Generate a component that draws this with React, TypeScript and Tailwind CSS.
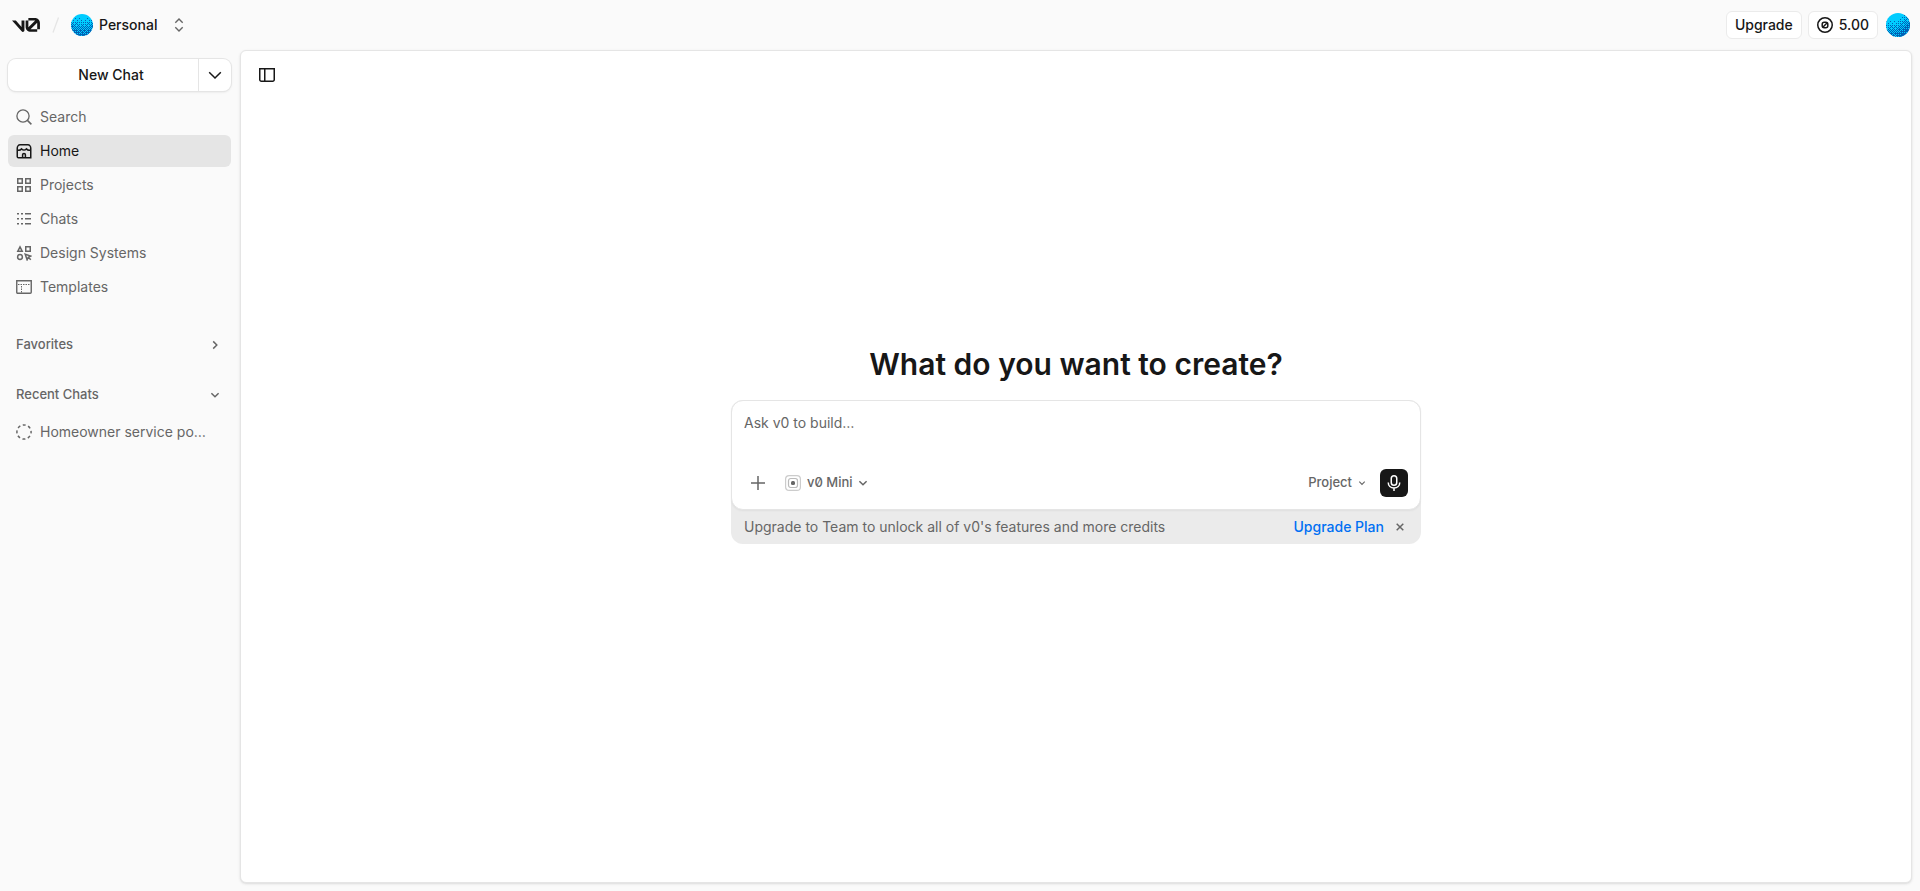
import type {ComponentType, ReactNode} from 'react'
import clsx from 'clsx'

function Icon({children, className}: {children: ReactNode; className?: string}) {
    return (
        <svg
            viewBox="0 0 16 16"
            fill="none"
            stroke="currentColor"
            strokeWidth={1.5}
            aria-hidden="true"
            className={clsx('shrink-0', className ?? 'size-4')}
        >
            {children}
        </svg>
    )
}

const SearchIcon = () => (
    <Icon>
        <circle cx="7" cy="7" r="6.1" strokeWidth={1.3}/>
        <path d="M11.4 11.4 15.4 15.4"/>
    </Icon>
)

const HomeIcon = () => (
    <Icon>
        <path d="M1.25 6.2V13.5C1.25 14.3 1.5 14.75 2.4 14.75H14.75V5.2C14.75 3.5 13.6 1.75 11.9 1.75H4.1C2.4 1.75 1.25 3.5 1.25 5.2V6.5C2.4 7.6 4.2 7.4 5.7 5.9C7 7.4 9 7.4 10.3 5.9C11.8 7.4 13.6 7.6 14.75 6.5"/>
        <path d="M6.6 14.5V11.8A1.4 1.4 0 0 1 9.4 11.8V14.5"/>
    </Icon>
)

const ProjectsIcon = () => (
    <Icon>
        <path d="M1.75 1.75H6.25V6.25H1.75ZM9.75 1.75H14.25V6.25H9.75ZM1.75 9.75H6.25V14.25H1.75ZM9.75 9.75H14.25V14.25H9.75Z"/>
    </Icon>
)

const ChatsIcon = () => (
    <Icon>
        <path d="M1 2.75H3M5 2.75H7M9 2.75H15M1 7.75H3M5 7.75H7M9 7.75H15M1 12.75H3M5 12.75H7M9 12.75H15"/>
    </Icon>
)

const DesignSystemsIcon = () => (
    <Icon>
        <path d="M4 1.9 6.2 6.25H1.8ZM9.75 1.75H14.25V6.25H9.75Z"/>
        <circle cx="4" cy="12" r="2.4"/>
        <path d="M9.2 9.2 14.8 11.1 12.3 12.3 11.1 14.8ZM12 12 14.8 14.8"/>
    </Icon>
)

const TemplatesIcon = () => (
    <Icon>
        <path d="M.75 1.75H15.25V13.2C15.25 14 14.8 14.25 14.2 14.25H1.8C1.1 14.25 .75 13.8 .75 13.2Z" strokeWidth={1.4}/>
        <path d="M2 5.5H14M5.5 7V14" strokeWidth={1} strokeDasharray="1.5 1"/>
    </Icon>
)

const SidebarIcon = () => (
    <Icon>
        <path d="M.75 1.75H15.25V12.6A1.6 1.6 0 0 1 13.65 14.25H2.35A1.6 1.6 0 0 1 .75 12.6ZM5.75 2V14"/>
    </Icon>
)

const ChevronDown = () => (
    <Icon>
        <path d="M2.2 5.2 8 11 13.8 5.2"/>
    </Icon>
)

const SmallChevron = ({className}: {className?: string}) => (
    <Icon className={className}>
        <path d="M4.4 6.2 8 9.8 11.6 6.2"/>
    </Icon>
)

function Logo() {
    return (
        <svg viewBox="0 0 40 20" fill="currentColor" className="h-[14px] w-7" aria-label="v0">
            <path d="M23.39 0H32.92C36.78 0 39.91 3.13 39.91 6.99V16.08H36V6.99C36 6.9 36 6.81 35.99 6.72L26.46 16.08H36V19.78H26.56C22.7 19.78 19.48 16.61 19.48 12.75V3.69H23.39V12.75C23.39 12.93 23.4 13.1 23.43 13.27L33.17 3.7C33.09 3.69 33 3.69 32.92 3.69H23.39Z"/>
            <path d="M13.77 19.1 0 3.69H5.54L13.62 12.73V3.69H17.75V17.57C17.75 19.67 15.17 20.66 13.77 19.1Z"/>
        </svg>
    )
}

const BAYER = [
    [0, 8, 2, 10],
    [12, 4, 14, 6],
    [3, 11, 1, 9],
    [15, 7, 13, 5],
]

// Dithered sphere, lit from the top
function Avatar({id, size, slant, className}: {id: string; size: number; slant: number; className: string}) {
    const cells: ReactNode[] = []
    for (let y = 0; y < size; y++) {
        for (let x = 0; x < size; x++) {
            const dx = (x - size / 2) / size
            const dy = y / size
            const shade = dy * 0.9 + dx * slant + dx * dx * 0.6
            if (shade > (BAYER[y % 4][x % 4] + 3) / 18) {
                cells.push(<rect key={`${x}-${y}`} x={x} y={y} width="1" height="1"/>)
            }
        }
    }
    return (
        <svg viewBox={`0 0 ${size} ${size}`} className={className} aria-hidden="true">
            <defs>
                <clipPath id={`${id}-clip`}>
                    <circle cx={size / 2} cy={size / 2} r={size / 2}/>
                </clipPath>
            </defs>
            <g clipPath={`url(#${id}-clip)`}>
                <rect width={size} height={size} fill="#00ccff"/>
                <g fill="#0061b5" shapeRendering="crispEdges">{cells}</g>
            </g>
        </svg>
    )
}

function Header() {
    return (
        <header className="flex h-[50px] shrink-0 items-center justify-between pr-[10px] pl-3">
            <div className="flex items-center">
                <a href="#" aria-label="v0 home"><Logo/></a>
                <svg viewBox="0 0 16 16" fill="none" stroke="#e5e5e5" strokeWidth={1.3} className="ml-2 size-4" aria-hidden="true">
                    <path d="M5 15.5 10.5 .5"/>
                </svg>
                <button type="button" className="ml-[7px] flex items-center gap-1.5 text-sm font-medium">
                    <Avatar id="team" size={22} slant={0} className="size-[22px]"/>
                    Personal
                    <Icon className="ml-2 size-4 text-[#666]">
                        <path d="M4.3 5.8 8 2.1 11.7 5.8M4.3 10.2 8 13.9 11.7 10.2" strokeWidth={1.4}/>
                    </Icon>
                </button>
            </div>
            <div className="flex items-center">
                <button type="button" className="h-7 rounded-md border border-[#ebebeb] bg-white px-2 text-sm font-medium">
                    Upgrade
                </button>
                <button type="button" className="ml-1.5 flex h-7 items-center gap-1.5 rounded-md border border-[#ebebeb] bg-white px-2 text-sm font-medium">
                    <Icon>
                        <circle cx="8" cy="8" r="7.25"/>
                        <rect x="5.2" y="5.2" width="5.6" height="5.6" rx="2"/>
                        <path d="M5.8 10.2 10.2 5.8"/>
                    </Icon>
                    5.00
                </button>
                <button type="button" aria-label="Account" className="ml-2">
                    <Avatar id="user" size={24} slant={0.5} className="size-6"/>
                </button>
            </div>
        </header>
    )
}

const links: {name: string; icon: ComponentType; active?: boolean}[] = [
    {name: 'Search', icon: SearchIcon},
    {name: 'Home', icon: HomeIcon, active: true},
    {name: 'Projects', icon: ProjectsIcon},
    {name: 'Chats', icon: ChatsIcon},
    {name: 'Design Systems', icon: DesignSystemsIcon},
    {name: 'Templates', icon: TemplatesIcon},
]

function Sidebar() {
    return (
        <aside className="flex w-60 shrink-0 flex-col pt-[9px] pr-[9px] pl-2 text-[#666]">
            <div className="rounded-lg shadow-sm">
                <div className="flex h-8 rounded-lg bg-white text-sm font-medium text-[#171717] ring-1 ring-[#e5e5e5]">
                    <button type="button" className="flex-1 pl-4">New Chat</button>
                    <button type="button" aria-label="More options" className="flex w-[33px] items-center justify-center border-l border-[#e5e5e5]">
                        <ChevronDown/>
                    </button>
                </div>
            </div>
            <nav className="mt-[10px] flex flex-col gap-0.5">
                {links.map((link) => (
                    <a
                        key={link.name}
                        href="#"
                        className={clsx(
                            'flex h-8 items-center gap-2 rounded-md px-2 text-sm',
                            link.active && 'bg-[#e5e5e5] text-[#171717]',
                        )}
                    >
                        <link.icon/>
                        {link.name}
                    </a>
                ))}
            </nav>
            <button type="button" className="mt-[26px] flex h-8 items-center justify-between px-2 text-[13px] font-medium">
                Favorites
                <SmallChevron className="size-4 -rotate-90"/>
            </button>
            <button type="button" className="mt-[18px] flex h-8 items-center justify-between px-2 text-[13px] font-medium">
                Recent Chats
                <SmallChevron/>
            </button>
            <a href="#" className="mt-[5px] flex h-8 items-center gap-2 px-2 text-sm">
                <Icon>
                    <circle cx="8" cy="8" r="7.1" strokeDasharray="3 2.58" strokeDashoffset="1.5"/>
                </Icon>
                <span className="truncate">Homeowner service po…</span>
            </a>
        </aside>
    )
}

function Composer() {
    return (
        <div className="w-full max-w-[690px] rounded-xl bg-[#ebebeb]">
            <form className="flex h-[110px] flex-col justify-between rounded-xl border border-[#e5e5e5] bg-white p-3 shadow-xs">
                <textarea
                    rows={1}
                    aria-label="Prompt"
                    placeholder="Ask v0 to build…"
                    className="block w-full resize-none text-sm outline-none placeholder:text-[#666]"
                />
                <div className="flex h-7 items-center text-[13px] font-medium text-[#666]">
                    <button type="button" aria-label="Add attachment" className="flex size-7 items-center justify-center">
                        <Icon>
                            <path d="M8 1V15M1 8H15"/>
                        </Icon>
                    </button>
                    <button type="button" className="ml-[13px] flex items-center slashed-zero">
                        <Icon className="mr-1.5 size-4">
                            <rect x=".6" y=".6" width="14.8" height="14.8" rx="3.5" stroke="#ccc" strokeWidth={1.2}/>
                            <rect x="3.5" y="3.5" width="9" height="9" rx="2.2" stroke="#bbb" strokeWidth={1.2}/>
                            <rect x="6" y="6" width="4" height="4" rx="1.5" fill="currentColor" stroke="none"/>
                        </Icon>
                        v0 Mini
                        <SmallChevron className="ml-0.5 size-4"/>
                    </button>
                    <button type="button" className="mr-3 ml-auto flex items-center gap-1">
                        Project
                        <SmallChevron className="size-3"/>
                    </button>
                    <button type="button" aria-label="Voice input" className="flex size-7 items-center justify-center rounded-md bg-[#171717] text-white">
                        <Icon>
                            <rect x="5.25" y=".75" width="5.5" height="9.5" rx="2.75"/>
                            <path d="M2.25 7.5C2.25 10.8 4.7 13 8 13S13.75 10.8 13.75 7.5M8 13V16"/>
                        </Icon>
                    </button>
                </div>
            </form>
            <div className="flex h-[34px] items-center pr-[13px] pl-[13px] text-sm text-[#666]">
                <p>Upgrade to Team to unlock all of v0's features and more credits</p>
                <a href="#" className="mr-2 ml-auto font-medium text-[#0070f3]">Upgrade Plan</a>
                <button type="button" aria-label="Dismiss">
                    <Icon>
                        <path d="M4.7 4.7 11.3 11.3M11.3 4.7 4.7 11.3"/>
                    </Icon>
                </button>
            </div>
        </div>
    )
}

export default function App() {
    return (
        <div className="flex min-h-screen flex-col bg-[#fafafa] font-[Inter,sans-serif] text-[#171717]">
            <Header/>
            <div className="flex flex-1">
                <Sidebar/>
                <main className="mr-2 mb-2 flex flex-1 flex-col rounded-md border border-[#e5e5e5] bg-white shadow-sm">
                    <div className="flex h-12 items-center px-[18px]">
                        <button type="button" aria-label="Toggle sidebar">
                            <SidebarIcon/>
                        </button>
                    </div>
                    <div className="flex flex-1 flex-col items-center justify-center px-4 pb-[94px]">
                        <h1 className="mb-4 text-[30px] leading-10 font-semibold">
                            What do you want to create?
                        </h1>
                        <Composer/>
                    </div>
                </main>
            </div>
        </div>
    )
}
